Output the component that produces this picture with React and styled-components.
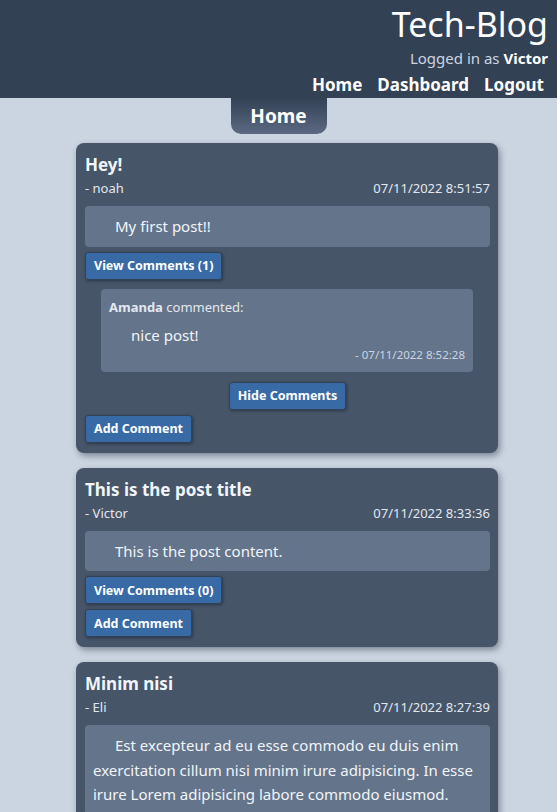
import React from 'react';
import styled, { createGlobalStyle } from 'styled-components';

const posts = [
  {
    title: 'Hey!',
    author: 'noah',
    date: '07/11/2022 8:51:57',
    content: 'My first post!!',
    count: 1,
    open: true,
    comments: [{ user: 'Amanda', text: 'nice post!', date: '07/11/2022 8:52:28' }],
  },
  {
    title: 'This is the post title',
    author: 'Victor',
    date: '07/11/2022 8:33:36',
    content: 'This is the post content.',
    count: 0,
    open: false,
    comments: [],
  },
  {
    title: 'Minim nisi',
    author: 'Eli',
    date: '07/11/2022 8:27:39',
    content:
      'Est excepteur ad eu esse commodo eu duis enim exercitation cillum nisi minim irure adipisicing. In esse irure Lorem adipisicing labore commodo eiusmod.',
    count: 0,
    open: false,
    comments: [],
  },
];

const App = () => (
  <>
    <GlobalStyle />
    <Header>
      <Brand>Tech-Blog</Brand>
      <Status>
        Logged in as <b>Victor</b>
      </Status>
      <Nav>
        <NavLink>Home</NavLink>
        <NavLink>Dashboard</NavLink>
        <NavLink>Logout</NavLink>
      </Nav>
    </Header>
    <Main>
      <PageTab>Home</PageTab>
      <Feed>
        {posts.map((post) => (
          <Card key={post.title}>
            <Title>{post.title}</Title>
            <Meta>
              <span>- {post.author}</span>
              <span>{post.date}</span>
            </Meta>
            <Content>{post.content}</Content>
            <Button>View Comments ({post.count})</Button>
            {post.open && (
              <>
                {post.comments.map((c) => (
                  <Comment key={c.date}>
                    <CommentHead>
                      <b>{c.user}</b> commented:
                    </CommentHead>
                    <CommentText>{c.text}</CommentText>
                    <CommentDate>- {c.date}</CommentDate>
                  </Comment>
                ))}
                <Centered>
                  <Button>Hide Comments</Button>
                </Centered>
              </>
            )}
            <Button>Add Comment</Button>
          </Card>
        ))}
      </Feed>
    </Main>
  </>
);

export default App;

const GlobalStyle = createGlobalStyle`
  body {
    margin: 0;
    background: #cbd5e1;
    font-family: "Noto Sans", "Open Sans", sans-serif;
    color: #e2e8f0;
  }
`;

const Header = styled.header`
  background: #334155;
  color: #fff;
  display: flex;
  flex-direction: column;
  align-items: flex-end;
  padding: 1px 9px 0 0;
  height: 98px;
  box-sizing: border-box;
`;

const Brand = styled.h1`
  margin: 0;
  font-weight: 400;
  font-size: 34px;
  line-height: 46px;
`;

const Status = styled.div`
  font-size: 15px;
  line-height: 20px;
  margin-top: 1px;
  color: #cbd5e1;

  b {
    color: #fff;
  }
`;

const Nav = styled.nav`
  display: flex;
  gap: 15px;
  margin-top: 5px;
  margin-right: 4px;
`;

const NavLink = styled.a`
  font-weight: 700;
  font-size: 17px;
  line-height: 24px;
  color: #fff;
  cursor: pointer;
`;

const Main = styled.main`
  display: flex;
  flex-direction: column;
  align-items: center;
`;

const PageTab = styled.div`
  width: 96px;
  height: 36px;
  display: flex;
  align-items: center;
  justify-content: center;
  background: linear-gradient(#334155, #5b6a82);
  border-radius: 0 0 10px 10px;
  color: #fff;
  font-weight: 700;
  font-size: 19px;
`;

const Feed = styled.div`
  display: flex;
  flex-direction: column;
  gap: 15px;
  width: 422px;
  margin: 9px 0 20px 17px;
`;

const Card = styled.article`
  background: #475569;
  border-radius: 8px;
  padding: 9px 8px 10px 9px;
  box-shadow: 2px 3px 6px rgba(30, 41, 59, 0.45);
  display: flex;
  flex-direction: column;
  align-items: flex-start;
  gap: 5px;
`;

const Title = styled.h2`
  margin: 0;
  font-size: 17px;
  line-height: 26px;
  font-weight: 700;
  color: #f1f5f9;
`;

const Meta = styled.div`
  align-self: stretch;
  display: flex;
  justify-content: space-between;
  font-size: 13px;
  line-height: 18px;
  margin-top: -4px;
  margin-bottom: 4px;
`;

const Content = styled.p`
  align-self: stretch;
  margin: 0;
  background: #64748b;
  border-radius: 4px;
  padding: 8px 8px;
  text-indent: 22px;
  font-size: 15px;
  line-height: 24.5px;
  color: #f1f5f9;
`;

const Button = styled.button`
  background: #386aa6;
  color: #fff;
  border: 1px solid #334155;
  border-radius: 3px;
  padding: 0 8px;
  height: 28px;
  box-sizing: border-box;
  font-family: inherit;
  font-weight: 700;
  font-size: 12.5px;
  box-shadow: 1px 1px 3px rgba(15, 23, 42, 0.5);
  cursor: pointer;
`;

const Comment = styled.div`
  align-self: stretch;
  margin: 4px 17px 0 16px;
  background: #64748b;
  border-radius: 4px;
  padding: 8px 8px 9px 8px;
`;

const CommentHead = styled.div`
  font-size: 13px;
  line-height: 20px;
`;

const CommentText = styled.div`
  font-size: 15px;
  line-height: 24px;
  padding-left: 22px;
  margin-top: 6px;
  color: #f1f5f9;
`;

const CommentDate = styled.div`
  text-align: right;
  font-size: 11.5px;
  line-height: 16px;
  color: #cbd5e1;
`;

const Centered = styled.div`
  align-self: stretch;
  display: flex;
  justify-content: center;
  margin-top: 5px;
`;
